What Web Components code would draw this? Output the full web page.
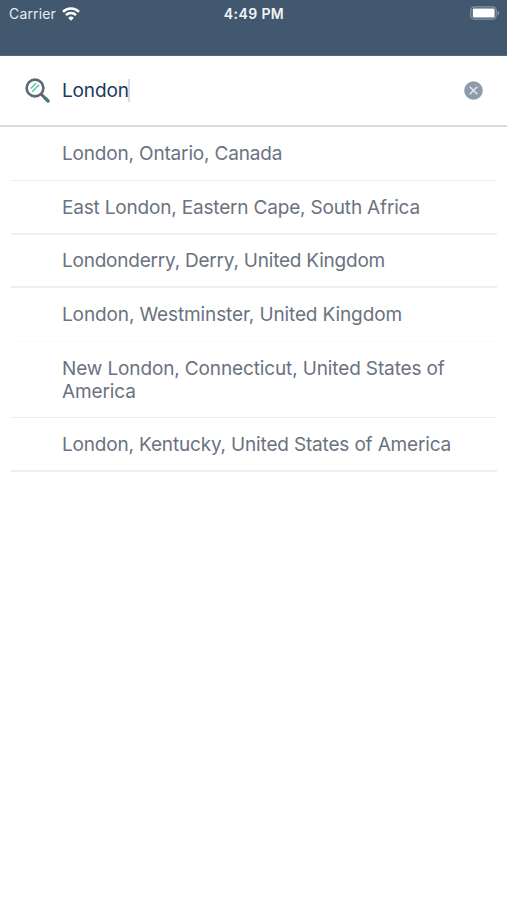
<!DOCTYPE html>
<html lang="en"><head><meta charset="utf-8"><title>City search</title>
<style>body{margin:0;background:#fff;font-family:Inter,"Liberation Sans",sans-serif}</style></head><body>
<city-app></city-app>
<script>
const define=(name,html)=>customElements.define(name,class extends HTMLElement{constructor(){super();this.attachShadow({mode:'open'}).innerHTML=html}});
define('status-bar',`<style>:host{display:grid;grid-template-columns:1fr auto 1fr;align-items:start;height:56px;padding:0 7px 0 9px;box-sizing:border-box;background:#42586f;border-bottom:1px solid #53677c;color:#fff;font-size:14px;line-height:28px}
.left{display:flex;align-items:center;gap:6px;height:27px;color:#e6ebf0;letter-spacing:.15px}.time{font-weight:600;font-size:14px;letter-spacing:.4px;margin-right:1px;color:#f2f5f8}.right{display:flex;justify-content:flex-end;align-items:center;height:26px}svg{display:block}</style>
<div class="left"><span>Carrier</span><svg width="18" height="14" viewBox="0 0 18 14" fill="none" stroke="#fff" stroke-width="2.5"><path d="M1 4.9a11.3 11.3 0 0 1 16 0M4 8.2a7 7 0 0 1 10 0"/><path d="M9 13.7L6.2 10.9a4 4 0 0 1 5.6 0Z" fill="#fff" stroke="none"/></svg></div>
<div class="time">4:49 PM</div>
<div class="right"><svg width="30" height="14" viewBox="0 0 30 14"><rect x=".8" y=".8" width="25.4" height="12.4" rx="3.6" fill="none" stroke="#8796a7" stroke-width="1.2"/><rect x="2.8" y="2.5" width="21.8" height="9" rx="1.2" fill="#fff"/><path d="M27.6 4.7c2 .8 2 3.8 0 4.6z" fill="#8796a7"/></svg></div>`);
define('search-field',`<style>:host{display:flex;align-items:center;height:71px;box-sizing:border-box;padding:0 24px 0 25px;border-bottom:2px solid #dcdcdd;color:#193b5c;font-size:19px}
.q{margin-left:12px;flex:1;display:flex;align-items:center;letter-spacing:-.15px}.caret{width:2px;height:23px;margin-left:-1px;background:#d3daf3}svg{display:block}</style>
<svg width="25" height="26" viewBox="0 0 25 26" fill="none"><circle cx="10" cy="10" r="8.4" stroke="#5f6775" stroke-width="2.6"/><path d="M16 16l5.5 5.5" stroke="#5f6775" stroke-width="3"/><path d="M20.5 20.5l2.5 2.5" stroke="#3f8078" stroke-width="3.4" stroke-linecap="round"/><path d="M5.8 10.6l5.2-5.4M7.2 13.8l6.8-7" stroke="#4cc9a0" stroke-width="1.4"/></svg>
<div class="q"><span><slot></slot></span><i class="caret"></i></div>
<svg width="19" height="19" viewBox="0 0 19 19"><circle cx="9.5" cy="9.5" r="9.3" fill="#8d9bab"/><path d="M5.7 5.7l7.6 7.6M13.3 5.7l-7.6 7.6" stroke="#e9edf1" stroke-width="1.3"/></svg>`);
define('city-row',`<style>:host{display:block;box-sizing:border-box;height:var(--height,54px);margin:0 10px 0 11px;padding:var(--top,15px) 35px 0 51px;border-bottom:var(--line,2px solid #eeeeef);color:#6b7280;font-size:19px;line-height:23px;letter-spacing:var(--track,-.17px)}</style><slot></slot>`);
define('city-app',`<style>:host{display:block;min-height:900px}
.r1{--line:1px solid #ebebec}.r2{--track:-.18px}.r3{--height:53px;--top:14px;--track:-.22px}.r4{--track:-.12px;--line:1px solid #fafafa}.r5{--height:76px;--track:-.13px;--line:1px solid #ececed}.r6{--track:-.17px}</style><status-bar></status-bar><search-field>London</search-field>
<city-row class="r1">London, Ontario, Canada</city-row><city-row class="r2">East London, Eastern Cape, South Africa</city-row><city-row class="r3">Londonderry, Derry, United Kingdom</city-row><city-row class="r4">London, Westminster, United Kingdom</city-row><city-row class="r5">New London, Connecticut, United States of America</city-row><city-row class="r6">London, Kentucky, United States of America</city-row>`);
</script></body></html>
